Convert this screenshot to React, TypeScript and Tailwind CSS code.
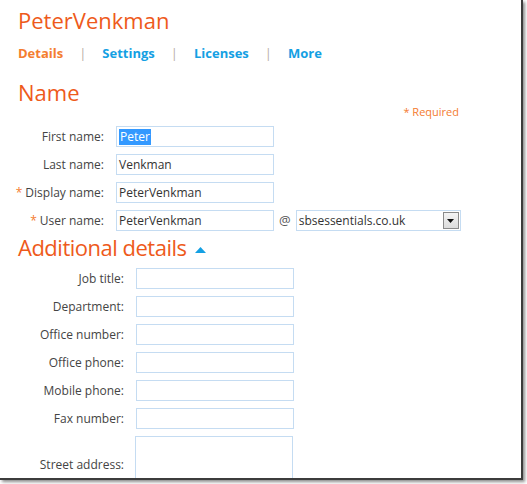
const labelFont = { fontFamily: '"Open Sans", "Noto Sans", sans-serif' }

type FieldProps = {
  label: string
  required?: boolean
  value?: string
  selected?: boolean
  labelW: string
  inputW: string
}

function Field({ label, required, value, selected, labelW, inputW }: FieldProps) {
  return (
    <div className="flex items-center h-[21px] mb-[7px]">
      <div className={`${labelW} shrink-0 text-right text-[12px] text-[#444]`}>
        {required && <span className="text-[#f47b30] mr-[3px]">*</span>}
        {label}:
      </div>
      <div
        className={`${inputW} h-[21px] ml-[12px] border border-[#c5dcf2] bg-white flex items-center px-[2px] text-[12px] text-[#333]`}
      >
        {selected ? <span className="bg-[#3399ff] text-white leading-[16px] px-[1px]">{value}</span> : value}
      </div>
    </div>
  )
}

export default function App() {
  const names = [
    { label: 'First name', value: 'Peter', selected: true },
    { label: 'Last name', value: 'Venkman' },
    { label: 'Display name', value: 'PeterVenkman', required: true },
  ]
  const extra = ['Job title', 'Department', 'Office number', 'Office phone', 'Mobile phone', 'Fax number']

  return (
    <div className="w-[527px] h-[484px] bg-white overflow-hidden" style={labelFont}>
      <div className="w-[523px] h-[480px] bg-white border-r-2 border-b-2 border-[#3c3c3c] shadow-[2px_2px_3px_rgba(0,0,0,0.45)] overflow-hidden">
        {/* Header */}
        <div className="pl-[18px] pt-[6px]">
          <h1 className="text-[22px] leading-[28px] text-[#ee5a1b]">PeterVenkman</h1>
          <nav className="flex items-center gap-[16px] mt-[10px] text-[13px] font-bold leading-[18px]">
            <span className="text-[#f47d30]">Details</span>
            <span className="text-[#b8aea6] font-normal">|</span>
            <span className="text-[#14a0e3]">Settings</span>
            <span className="text-[#b8aea6] font-normal">|</span>
            <span className="text-[#14a0e3]">Licenses</span>
            <span className="text-[#b8aea6] font-normal">|</span>
            <span className="text-[#14a0e3]">More</span>
          </nav>
          <h2 className="text-[22px] leading-[30px] text-[#ee5a1b] mt-[15px]">Name</h2>
        </div>

        <div className="flex justify-end pr-[62px] -mt-[3px] text-[11px] leading-[16px] text-[#f47b30]">* Required</div>

        {/* Name fields */}
        <div className="mt-[6px]">
          {names.map((n) => (
            <Field key={n.label} {...n} labelW="w-[104px]" inputW="w-[158px]" />
          ))}
          <div className="flex items-center h-[21px]">
            <div className="w-[104px] shrink-0 text-right text-[12px] text-[#444]">
              <span className="text-[#f47b30] mr-[3px]">*</span>User name:
            </div>
            <div className="w-[158px] h-[21px] ml-[12px] border border-[#c5dcf2] flex items-center px-[2px] text-[12px] text-[#333]">
              PeterVenkman
            </div>
            <span className="ml-[5px] text-[13px] text-[#555]">@</span>
            <div className="w-[165px] h-[21px] ml-[5px] border border-[#c5dcf2] flex items-center justify-between pl-[2px] pr-[1px] text-[12px] text-[#333]">
              sbsessentials.co.uk
              <div className="w-[16px] h-[17px] border border-[#8a8a8a] bg-gradient-to-b from-[#f4f4f4] to-[#dcdcdc] flex items-center justify-center">
                <svg width="7" height="4" viewBox="0 0 7 4">
                  <path d="M0 0h7L3.5 4z" fill="#111" />
                </svg>
              </div>
            </div>
          </div>
        </div>

        {/* Additional details */}
        <div className="pl-[18px] mt-[1px] flex items-center">
          <h2 className="text-[22px] leading-[30px] tracking-[-0.5px] text-[#ee5a1b]">Additional details</h2>
          <svg className="ml-[9px] mt-[6px]" width="11" height="6" viewBox="0 0 11 6">
            <path d="M0 6L5.5 0L11 6z" fill="#14a0e3" />
          </svg>
        </div>

        <div className="mt-[6px]">
          {extra.map((l) => (
            <Field key={l} label={l} labelW="w-[124px]" inputW="w-[158px]" />
          ))}
          <div className="flex">
            <div className="w-[124px] shrink-0 text-right text-[12px] text-[#444] pt-[20px]">Street address:</div>
            <div className="w-[158px] h-[70px] ml-[11px] border border-[#c5dcf2]" />
          </div>
        </div>
      </div>
    </div>
  )
}
